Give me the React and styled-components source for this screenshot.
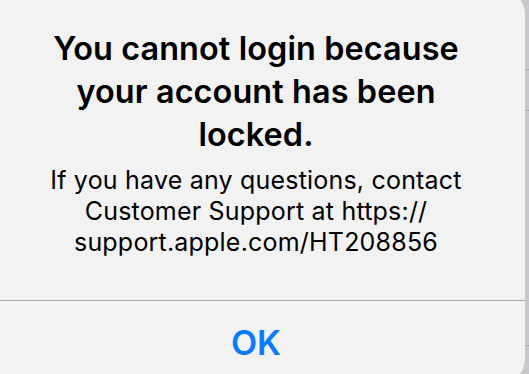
import React from "react";
import styled, { createGlobalStyle } from "styled-components";

const Global = createGlobalStyle`
  html, body { margin: 0; padding: 0; background: #c8c8cc; overflow: hidden; }
  * { box-sizing: border-box; }
`;

const Screen = styled.div`
  position: relative;
  width: 529px;
  height: 374px;
  overflow: hidden;
  background: #c8c8cc;
  font-family: Inter, "Open Sans", "Liberation Sans", sans-serif;
`;

const Backdrop = styled.div`
  display: flex;
  flex-direction: column;
`;

const BackRow = styled.div`
  height: ${(p) => p.$h}px;
  border-bottom: 1px solid #a9a9ad;
  background: ${(p) => p.$bg || "#c8c8cc"};
`;

const Alert = styled.div`
  position: absolute;
  left: -13px;
  top: -10px;
  width: 538px;
  height: 393px;
  border-radius: 24px;
  background: #f2f2f2;
  display: flex;
  flex-direction: column;
  overflow: hidden;
`;

const Content = styled.div`
  display: flex;
  flex-direction: column;
  align-items: center;
  padding: 37px 50px 0;
  height: 310px;
  text-align: center;
  color: #000;
`;

const Title = styled.h1`
  margin: 0;
  font-size: 32.4px;
  font-weight: 600;
  line-height: 43px;
  letter-spacing: 0.1px;
`;

const Message = styled.p`
  margin: 9px 0 0;
  font-size: 25px;
  font-weight: 400;
  line-height: 31px;
  letter-spacing: 0.2px;
`;

const Divider = styled.div`
  height: 1px;
  background: #a8a8aa;
`;

const Button = styled.button`
  all: unset;
  display: flex;
  align-items: center;
  justify-content: center;
  height: 82px;
  font-family: Inter, "Open Sans", "Liberation Sans", sans-serif;
  font-size: 34px;
  font-weight: 600;
  color: #0a7aff;
`;

export default function App() {
  return (
    <>
      <Global />
      <Screen>
        <Backdrop>
          <BackRow $h={70} />
          <BackRow $h={41} />
          <BackRow $h={235} />
        </Backdrop>
        <Alert role="alertdialog">
          <Content>
            <Title>You cannot login because your account has been locked.</Title>
            <Message>
              If you have any questions, contact Customer Support at https://
              support.apple.com/HT208856
            </Message>
          </Content>
          <Divider />
          <Button>OK</Button>
        </Alert>
      </Screen>
    </>
  );
}
